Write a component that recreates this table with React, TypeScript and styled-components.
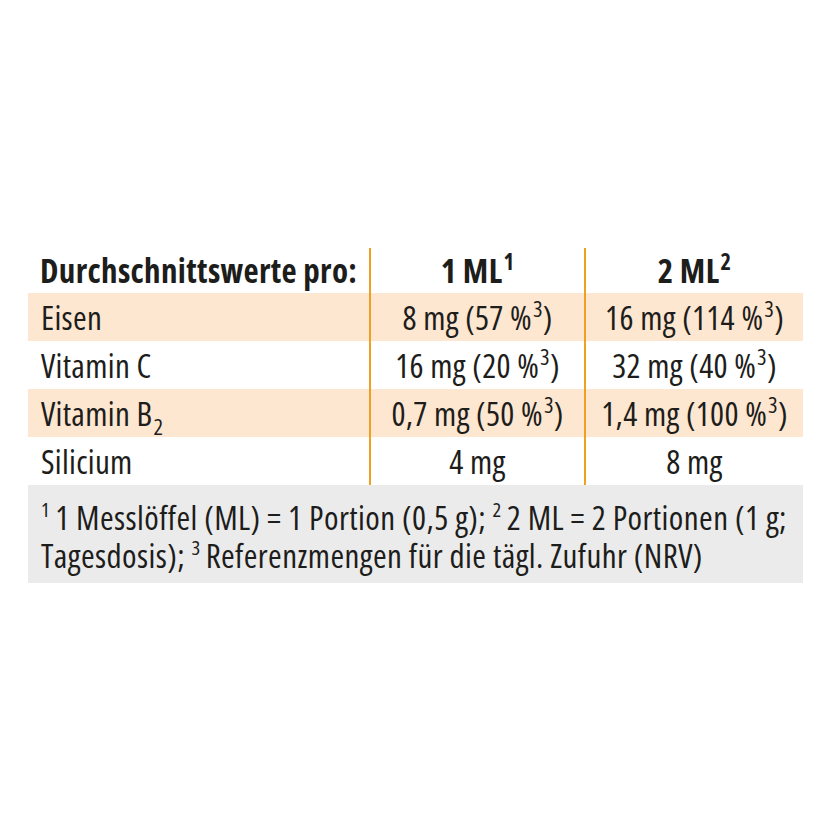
import React from "react";
import styled, { createGlobalStyle } from "styled-components";

const Global = createGlobalStyle`
  html, body { margin: 0; padding: 0; background: #ffffff; }
  body {
    font-family: "Open Sans", "Liberation Sans", sans-serif;
    font-stretch: 75%;
    color: #1d1d1b;
  }
`;

const Page = styled.div`
  width: 840px;
  height: 840px;
  box-sizing: border-box;
  padding: 248px 0 0 28px;
`;

const Table = styled.div`
  width: 775px;
  display: flex;
  flex-direction: column;
`;

const Row = styled.div<{ $shade?: boolean; $head?: boolean }>`
  display: grid;
  grid-template-columns: 341px 215px 219px;
  height: ${(p) => (p.$head ? 45 : 48)}px;
  background: ${(p) => (p.$shade ? "#fde7d1" : "transparent")};
`;

const Cell = styled.div<{ $center?: boolean; $rule?: boolean; $head?: boolean }>`
  box-sizing: border-box;
  font-size: 33px;
  font-weight: ${(p) => (p.$head ? 700 : 400)};
  padding: ${(p) => (p.$head ? "0 12px 0" : "2px 13px 0")};
  line-height: ${(p) => (p.$head ? 45 : 46)}px;
  text-align: ${(p) => (p.$center ? "center" : "left")};
  border-left: ${(p) => (p.$rule ? "2px solid #f0a021" : "none")};
  white-space: nowrap;
  letter-spacing: ${(p) => (p.$head ? "0.35px" : "0.3px")};
`;

const Sup = styled.sup`
  font-size: 0.68em;
  line-height: 0;
  vertical-align: 0;
  position: relative;
  top: -0.58em;
  margin-left: 1px;
`;

const Sub = styled.sub`
  font-size: 0.68em;
  line-height: 0;
  vertical-align: 0;
  position: relative;
  top: 0.4em;
  margin-left: 1px;
`;

const Note = styled.div`
  background: #ebebeb;
  height: 98px;
  box-sizing: border-box;
  padding: 14px 13px 0;
  font-size: 33px;
  line-height: 38px;
  letter-spacing: 0.42px;
  white-space: nowrap;
`;

const NoteSup = styled.sup`
  font-size: 0.62em;
  line-height: 0;
  vertical-align: 0;
  position: relative;
  top: -0.62em;
  margin-right: 5px;
`;

type Data = { name: React.ReactNode; a: React.ReactNode; b: React.ReactNode };

const pct = (v: string) => (
  <>
    ({v} %<Sup>3</Sup>)
  </>
);

const rows: Data[] = [
  { name: "Eisen", a: <>8 mg {pct("57")}</>, b: <>16 mg {pct("114")}</> },
  { name: "Vitamin C", a: <>16 mg {pct("20")}</>, b: <>32 mg {pct("40")}</> },
  {
    name: (
      <>
        Vitamin B<Sub>2</Sub>
      </>
    ),
    a: <>0,7 mg {pct("50")}</>,
    b: <>1,4 mg {pct("100")}</>,
  },
  { name: "Silicium", a: "4 mg", b: "8 mg" },
];

export default function App() {
  return (
    <>
      <Global />
      <Page>
        <Table>
          <Row $head>
            <Cell $head>Durchschnittswerte pro:</Cell>
            <Cell $head $center $rule>
              1 ML<Sup>1</Sup>
            </Cell>
            <Cell $head $center $rule>
              2 ML<Sup>2</Sup>
            </Cell>
          </Row>
          {rows.map((r, i) => (
            <Row key={i} $shade={i % 2 === 0}>
              <Cell>{r.name}</Cell>
              <Cell $center $rule>
                {r.a}
              </Cell>
              <Cell $center $rule>
                {r.b}
              </Cell>
            </Row>
          ))}
          <Note>
            <NoteSup>1</NoteSup>1 Messlöffel (ML) = 1 Portion (0,5 g); <NoteSup>2</NoteSup>2 ML = 2 Portionen (1 g;
            <br />
            Tagesdosis); <NoteSup>3</NoteSup>Referenzmengen für die tägl. Zufuhr (NRV)
          </Note>
        </Table>
      </Page>
    </>
  );
}
